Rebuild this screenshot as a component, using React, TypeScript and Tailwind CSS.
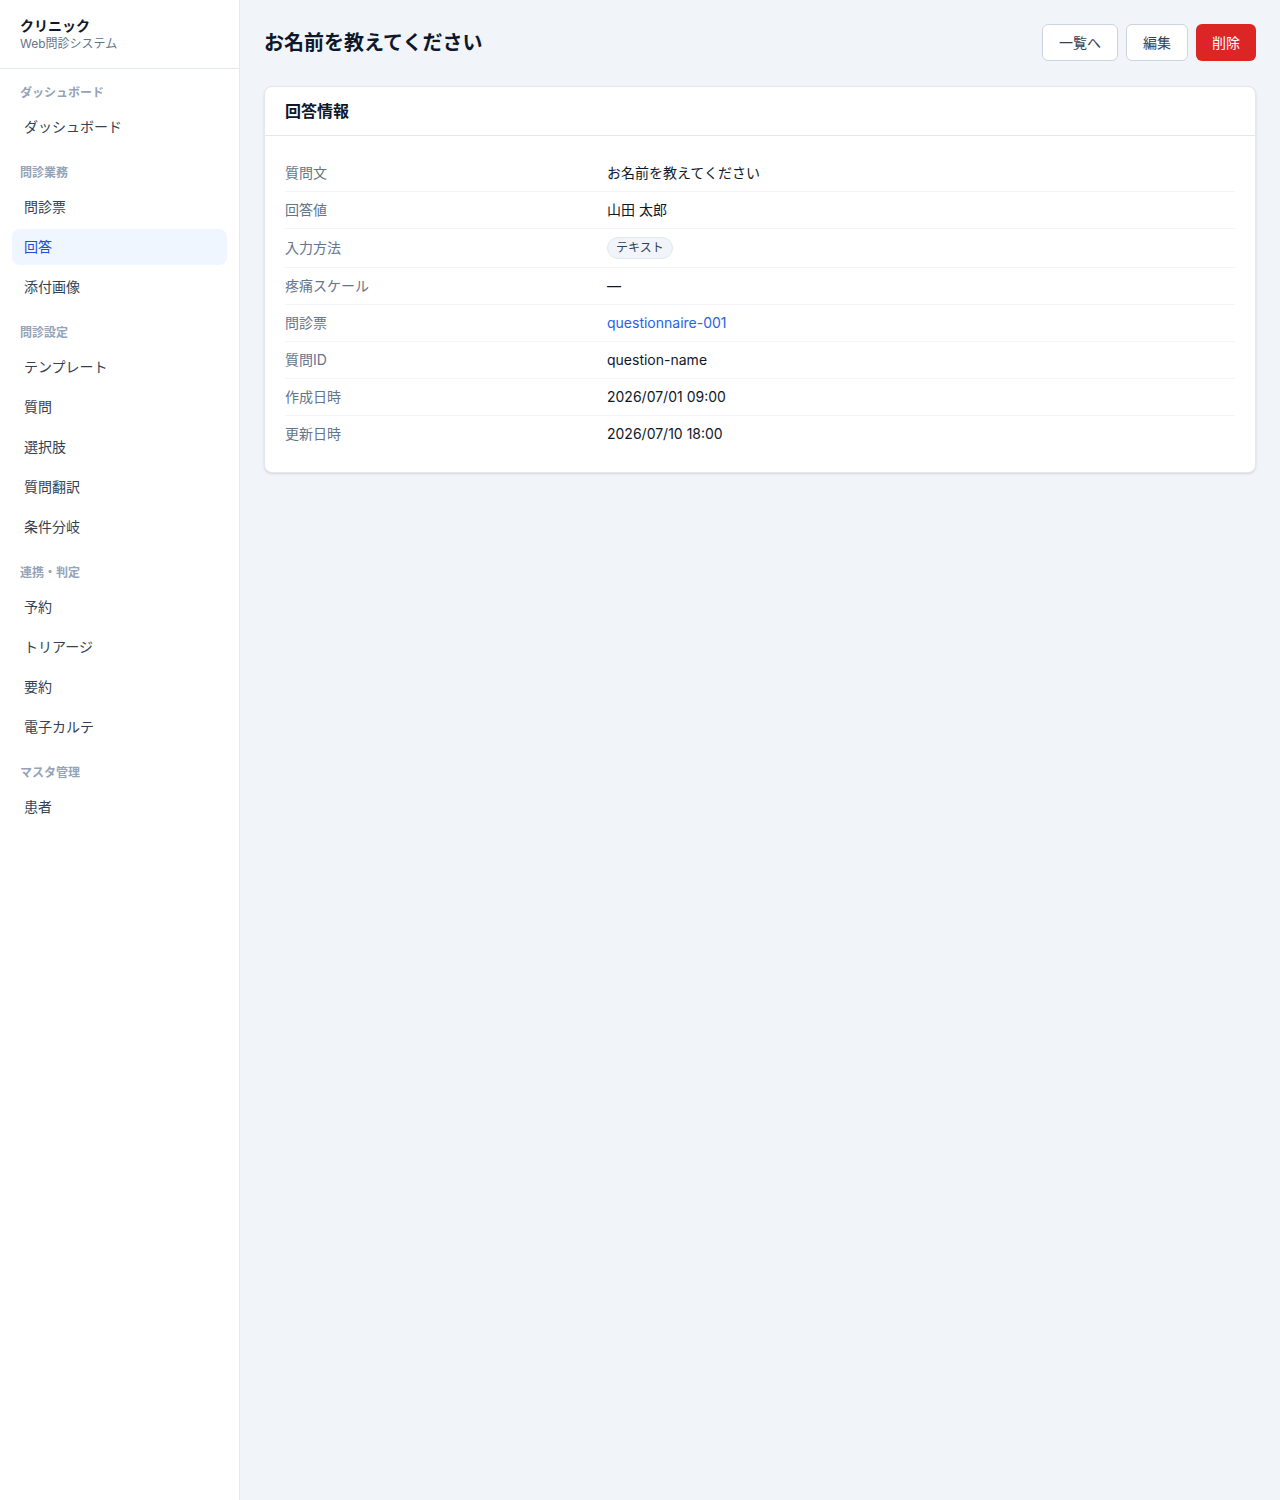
import React from "react";

const sections: { label: string; items: string[] }[] = [
  { label: "ダッシュボード", items: ["ダッシュボード"] },
  { label: "問診業務", items: ["問診票", "回答", "添付画像"] },
  { label: "問診設定", items: ["テンプレート", "質問", "選択肢", "質問翻訳", "条件分岐"] },
  { label: "連携・判定", items: ["予約", "トリアージ", "要約", "電子カルテ"] },
  { label: "マスタ管理", items: ["患者"] },
];

const rows: { label: string; value: React.ReactNode }[] = [
  { label: "質問文", value: "お名前を教えてください" },
  { label: "回答値", value: "山田 太郎" },
  {
    label: "入力方法",
    value: (
      <span className="inline-flex items-center rounded-full border border-[#e2e8f0] bg-[#f1f5f9] px-2 py-0.5 text-xs leading-4 text-[#334155]">
        テキスト
      </span>
    ),
  },
  { label: "疼痛スケール", value: "—" },
  { label: "問診票", value: <span className="text-[#2563eb]">questionnaire-001</span> },
  { label: "質問ID", value: "question-name" },
  { label: "作成日時", value: "2026/07/01 09:00" },
  { label: "更新日時", value: "2026/07/10 18:00" },
];

export default function App() {
  return (
    <div
      className="flex min-h-screen bg-[#f1f5f9] text-[#0f172a]"
      style={{ fontFamily: '"Inter", "Noto Sans CJK JP", sans-serif' }}
    >
      <aside className="w-[240px] shrink-0 border-r border-[#e2e8f0] bg-white">
        <div className="border-b border-[#e2e8f0] px-5 py-4">
          <div className="text-sm font-bold leading-5 text-[#0f172a]">クリニック</div>
          <div className="text-xs leading-4 text-[#64748b]">Web問診システム</div>
        </div>
        <nav className="px-3 pt-[16px]">
          {sections.map((s, i) => (
            <div key={s.label} className={i > 0 ? "mt-5" : ""}>
              <div className="mb-2 px-2 text-xs font-semibold leading-4 text-[#94a3b8]">{s.label}</div>
              <div className="flex flex-col gap-1">
                {s.items.map((it) => {
                  const active = it === "回答";
                  return (
                    <div
                      key={it}
                      className={
                        active
                          ? "flex h-9 items-center rounded-lg bg-[#eff6ff] px-3 text-sm leading-[34px] text-[#1d4ed8]"
                          : "flex h-9 items-center rounded-lg px-3 text-sm leading-[34px] text-[#334155]"
                      }
                    >
                      {it}
                    </div>
                  );
                })}
              </div>
            </div>
          ))}
        </nav>
      </aside>
      <main className="flex-1 p-6">
        <div className="mb-[25px] flex items-center justify-between">
          <h1 className="text-xl font-bold leading-7 text-[#0f172a]">お名前を教えてください</h1>
          <div className="flex items-center gap-2">
            <button className="h-[37px] rounded-md border border-[#cbd5e1] bg-white px-4 text-sm text-[#334155]">
              一覧へ
            </button>
            <button className="h-[37px] rounded-md border border-[#cbd5e1] bg-white px-4 text-sm text-[#334155]">
              編集
            </button>
            <button className="h-[37px] rounded-md bg-[#dc2626] px-4 text-sm text-white">削除</button>
          </div>
        </div>
        <div className="rounded-lg border border-[#e2e8f0] bg-white shadow-sm">
          <div className="border-b border-[#e2e8f0] px-5 py-3">
            <h2 className="text-base font-bold leading-6 text-[#0f172a]">回答情報</h2>
          </div>
          <dl className="px-5 pb-5 pt-[19px]">
            {rows.map((r, i) => (
              <div
                key={r.label}
                className={
                  i < rows.length - 1
                    ? "grid grid-cols-3 items-center gap-4 border-b border-[#f1f5f9] py-2"
                    : "grid grid-cols-3 items-center gap-4 py-2"
                }
              >
                <dt className="text-sm leading-5 text-[#64748b]">{r.label}</dt>
                <dd className="col-span-2 text-sm leading-5 text-[#0f172a]">{r.value}</dd>
              </div>
            ))}
          </dl>
        </div>
      </main>
    </div>
  );
}
